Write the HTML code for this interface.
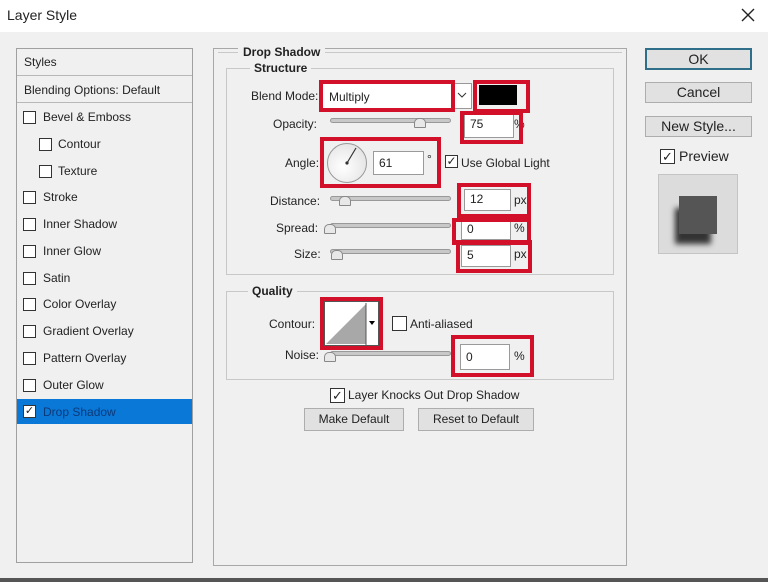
<!DOCTYPE html>
<html><head><meta charset="utf-8"><style>
*{box-sizing:border-box;margin:0;padding:0}
body{width:768px;height:582px;background:#f0f0f0;font-family:"Liberation Sans",sans-serif;font-size:12px;color:#222;position:relative;overflow:hidden}
.a{position:absolute}
.t{position:absolute;white-space:nowrap;line-height:14px}
.cb{position:absolute;width:13px;height:13px;border:1px solid #333;background:#fff}
.row{position:absolute;left:17px;width:175px;height:27px;border-bottom:1px solid #e4e4e4}
.red{position:absolute;border:4px solid #d2102a}
.inp{position:absolute;background:#fff;border:1px solid #9a9a9a;padding-left:5px;line-height:18px}
.trk{position:absolute;height:5px;background:#c8c8c8;border:1px solid #999;border-radius:3px}
.btn{position:absolute;background:#e1e1e1;border:1px solid #adadad;text-align:center}
.gl{position:absolute;border:1px solid #c8c8c8}
</style></head><body>
<div class="a" style="left:0;top:0;width:768px;height:32px;background:#fff"></div>
<div class="t" style="left:7px;top:8px;font-size:14px">Layer Style</div>
<svg class="a" style="left:741px;top:8px" width="14" height="14"><path d="M1 1L13 13M13 1L1 13" stroke="#222" stroke-width="1.4"/></svg>
<div class="a" style="left:0;top:578px;width:768px;height:4px;background:#555"></div>

<!-- left panel -->
<div class="a" style="left:16px;top:48px;width:177px;height:515px;border:1px solid #a0a0a0;background:#f0f0f0"></div>
<div class="row" style="top:49px;border-bottom:1px solid #b8b8b8"></div><div class="t" style="left:24px;top:55px">Styles</div>
<div class="row" style="top:76px;border-bottom:1px solid #b8b8b8"></div><div class="t" style="left:24px;top:83px">Blending Options: Default</div>
<div class="cb" style="left:23px;top:111px"></div><div class="t" style="left:43px;top:110px">Bevel &amp; Emboss</div>
<div class="cb" style="left:39px;top:138px"></div><div class="t" style="left:58px;top:137px">Contour</div>
<div class="cb" style="left:39px;top:165px"></div><div class="t" style="left:58px;top:164px">Texture</div>
<div class="cb" style="left:23px;top:191px"></div><div class="t" style="left:43px;top:190px">Stroke</div>
<div class="cb" style="left:23px;top:218px"></div><div class="t" style="left:43px;top:217px">Inner Shadow</div>
<div class="cb" style="left:23px;top:245px"></div><div class="t" style="left:43px;top:244px">Inner Glow</div>
<div class="cb" style="left:23px;top:272px"></div><div class="t" style="left:43px;top:271px">Satin</div>
<div class="cb" style="left:23px;top:298px"></div><div class="t" style="left:43px;top:297px">Color Overlay</div>
<div class="cb" style="left:23px;top:325px"></div><div class="t" style="left:43px;top:324px">Gradient Overlay</div>
<div class="cb" style="left:23px;top:352px"></div><div class="t" style="left:43px;top:351px">Pattern Overlay</div>
<div class="cb" style="left:23px;top:379px"></div><div class="t" style="left:43px;top:378px">Outer Glow</div>
<div class="a" style="left:17px;top:399px;width:175px;height:25px;background:#0a78d7"></div>
<div class="cb" style="left:23px;top:405px;font-size:11px;line-height:11px;text-align:center">✓</div><div class="t" style="left:43px;top:405px;color:#0b3a7a">Drop Shadow</div>

<!-- main panel -->
<div class="a" style="left:213px;top:48px;width:414px;height:518px;border:1px solid #a8a8a8"></div>
<div class="gl" style="left:218px;top:52px;width:404px;height:0;border-width:1px 0 0 0"></div>
<div class="t" style="left:238px;top:45px;font-weight:bold;background:#f0f0f0;padding:0 5px">Drop Shadow</div>
<div class="gl" style="left:226px;top:68px;width:388px;height:207px"></div>
<div class="t" style="left:250px;top:61px;font-weight:bold;background:#f0f0f0;padding:0 4px">Structure</div>

<div class="t" style="left:251px;top:89px">Blend Mode:</div>
<div class="a" style="left:322px;top:83px;width:150px;height:26px;background:#fff;border:1px solid #999"></div>
<div class="t" style="left:329px;top:90px">Multiply</div>
<svg class="a" style="left:457px;top:92px" width="10" height="7"><path d="M1 1L5 5L9 1" stroke="#333" fill="none"/></svg>
<div class="red" style="left:319px;top:80px;width:136px;height:32px"></div>
<div class="a" style="left:479px;top:85px;width:38px;height:20px;background:#000"></div>
<div class="red" style="left:473px;top:80px;width:57px;height:33px"></div>

<div class="t" style="left:273px;top:117px">Opacity:</div>
<div class="trk" style="left:330px;top:118px;width:121px"></div>
<div class="a" style="left:414px;top:118px;width:12px;height:10px;background:#e8e8e8;border:1px solid #888;border-radius:5px 5px 1px 1px"></div>
<div class="inp" style="left:464px;top:114px;width:50px;height:24px">75</div>
<div class="t" style="left:514px;top:117px">%</div>
<div class="red" style="left:460px;top:111px;width:63px;height:33px"></div>

<div class="t" style="left:285px;top:156px">Angle:</div>
<div class="a" style="left:327px;top:143px;width:40px;height:40px;border:1px solid #999;border-radius:50%;background:radial-gradient(circle at 40% 60%,#fff,#ddd)"></div>
<svg class="a" style="left:327px;top:143px" width="40" height="40"><line x1="20" y1="20" x2="29" y2="5" stroke="#333" stroke-width="1.2"/><circle cx="20" cy="20" r="1.6" fill="#333"/></svg>
<div class="inp" style="left:373px;top:151px;width:51px;height:24px;line-height:22px">61</div>
<div class="t" style="left:427px;top:152px">°</div>
<div class="red" style="left:320px;top:137px;width:121px;height:51px"></div>
<div class="cb" style="left:445px;top:155px;font-size:12px;line-height:11px;text-align:center">✓</div>
<div class="t" style="left:461px;top:156px">Use Global Light</div>

<div class="t" style="left:270px;top:194px">Distance:</div>
<div class="trk" style="left:330px;top:196px;width:121px"></div>
<div class="a" style="left:339px;top:196px;width:12px;height:10px;background:#e8e8e8;border:1px solid #888;border-radius:5px 5px 1px 1px"></div>
<div class="inp" style="left:464px;top:189px;width:47px;height:22px">12</div>
<div class="t" style="left:514px;top:193px">px</div>
<div class="red" style="left:457px;top:183px;width:74px;height:35px"></div>

<div class="t" style="left:276px;top:221px">Spread:</div>
<div class="trk" style="left:330px;top:223px;width:121px"></div>
<div class="a" style="left:324px;top:224px;width:12px;height:10px;background:#e8e8e8;border:1px solid #888;border-radius:5px 5px 1px 1px"></div>
<div class="inp" style="left:461px;top:220px;width:50px;height:20px;line-height:16px">0</div>
<div class="t" style="left:514px;top:221px">%</div>
<div class="red" style="left:452px;top:218px;width:79px;height:27px"></div>

<div class="t" style="left:294px;top:247px">Size:</div>
<div class="trk" style="left:330px;top:249px;width:121px"></div>
<div class="a" style="left:331px;top:250px;width:12px;height:10px;background:#e8e8e8;border:1px solid #888;border-radius:5px 5px 1px 1px"></div>
<div class="inp" style="left:461px;top:245px;width:50px;height:22px">5</div>
<div class="t" style="left:514px;top:247px">px</div>
<div class="red" style="left:456px;top:240px;width:76px;height:33px"></div>

<div class="gl" style="left:226px;top:291px;width:388px;height:89px"></div>
<div class="t" style="left:248px;top:284px;font-weight:bold;background:#f0f0f0;padding:0 4px">Quality</div>
<div class="t" style="left:269px;top:317px">Contour:</div>
<svg class="a" style="left:324px;top:301px" width="55" height="45"><rect x="0.5" y="0.5" width="54" height="44" fill="#fff" stroke="#555"/><polygon points="2,43 42,3 42,43" fill="#a8a8a8"/><line x1="42" y1="2" x2="42" y2="44" stroke="#555"/><polygon points="45,20 51,20 48,24" fill="#000"/></svg>
<div class="red" style="left:320px;top:297px;width:63px;height:53px"></div>
<div class="cb" style="left:392px;top:316px;width:15px;height:15px"></div>
<div class="t" style="left:410px;top:317px">Anti-aliased</div>

<div class="t" style="left:285px;top:348px">Noise:</div>
<div class="trk" style="left:330px;top:351px;width:121px"></div>
<div class="a" style="left:324px;top:352px;width:12px;height:10px;background:#e8e8e8;border:1px solid #888;border-radius:5px 5px 1px 1px"></div>
<div class="inp" style="left:460px;top:344px;width:50px;height:26px;line-height:24px">0</div>
<div class="t" style="left:514px;top:349px">%</div>
<div class="red" style="left:451px;top:335px;width:83px;height:42px"></div>

<div class="cb" style="left:330px;top:388px;width:15px;height:15px;font-size:13px;line-height:13px;text-align:center">✓</div>
<div class="t" style="left:348px;top:388px">Layer Knocks Out Drop Shadow</div>
<div class="btn" style="left:304px;top:408px;width:100px;height:23px;line-height:21px">Make Default</div>
<div class="btn" style="left:418px;top:408px;width:116px;height:23px;line-height:21px">Reset to Default</div>

<!-- right -->
<div class="btn" style="left:645px;top:48px;width:107px;height:22px;line-height:18px;border:2px solid #2f6f8a;font-size:14px">OK</div>
<div class="btn" style="left:645px;top:82px;width:107px;height:21px;line-height:19px;font-size:14px">Cancel</div>
<div class="btn" style="left:645px;top:116px;width:107px;height:21px;line-height:19px;font-size:14px">New Style...</div>
<div class="cb" style="left:660px;top:149px;width:15px;height:15px;font-size:13px;line-height:13px;text-align:center">✓</div>
<div class="t" style="left:679px;top:149px;font-size:14px">Preview</div>
<div class="a" style="left:658px;top:174px;width:80px;height:80px;background:#dcdcdc;border:1px solid #c4c4c4"></div>
<div class="a" style="left:675px;top:208px;width:36px;height:36px;background:#333;filter:blur(3px)"></div>
<div class="a" style="left:679px;top:196px;width:38px;height:38px;background:#555"></div>
</body></html>
